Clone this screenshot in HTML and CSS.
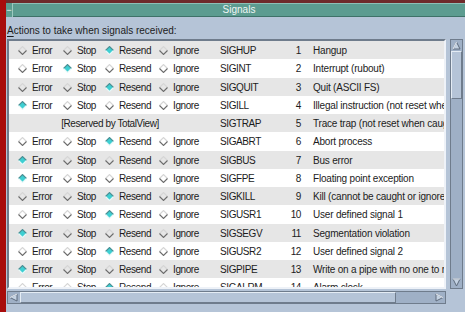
FILE: index.html
```html
<!DOCTYPE html>
<html lang="en">
<head>
    <meta charset="UTF-8">
    <title>Signals</title>
    <link rel="stylesheet" href="styles.css">
</head>
<body>
    <div class="stripe"></div>
    <div class="window">
        <div class="titlebar">
            <div class="menu-btn">&minus;</div>
            <div class="title">Signals</div>
        </div>

        <div class="content">
            <div class="label"><u>A</u>ctions to take when signals received:</div>

            <div class="list-area">
                <div class="list-row">
                    <div class="list-frame">
                        <div class="list" id="list"></div>
                    </div>
                    <div class="vscroll">
                        <div class="arrow arrow-up">
                            <svg width="9" height="9" viewBox="0 0 9 9"><polygon points="4.5,1 8,8 1,8" class="arr"/><path d="M1 8 L4.5 1" class="arr-hi"/></svg>
                        </div>
                        <div class="vthumb"></div>
                        <div class="vtrough"></div>
                        <div class="arrow arrow-down">
                            <svg width="9" height="9" viewBox="0 0 9 9"><polygon points="1,1 8,1 4.5,8" class="arr"/><path d="M1 1 L8 1" class="arr-hi"/></svg>
                        </div>
                    </div>
                </div>

                <div class="hscroll">
                    <div class="arrow arrow-left">
                        <svg width="9" height="9" viewBox="0 0 9 9"><polygon points="1,4.5 8,1 8,8" class="arr"/><path d="M1 4.5 L8 1" class="arr-hi"/></svg>
                    </div>
                    <div class="hthumb"></div>
                    <div class="htrough"></div>
                    <div class="arrow arrow-right">
                        <svg width="9" height="9" viewBox="0 0 9 9"><polygon points="1,1 8,4.5 1,8" class="arr"/><path d="M1 1 L8 4.5" class="arr-hi"/></svg>
                    </div>
                </div>
            </div>
        </div>
    </div>

    <script>
        // action index: 0 Error, 1 Stop, 2 Resend, 3 Ignore, -1 reserved
        var signals = [
            ['SIGHUP', 1, 'Hangup', 2],
            ['SIGINT', 2, 'Interrupt (rubout)', 1],
            ['SIGQUIT', 3, 'Quit (ASCII FS)', 2],
            ['SIGILL', 4, 'Illegal instruction (not reset when caught)', 0],
            ['SIGTRAP', 5, 'Trace trap (not reset when caught)', -1],
            ['SIGABRT', 6, 'Abort process', 2],
            ['SIGBUS', 7, 'Bus error', 0],
            ['SIGFPE', 8, 'Floating point exception', 0],
            ['SIGKILL', 9, 'Kill (cannot be caught or ignored)', 2],
            ['SIGUSR1', 10, 'User defined signal 1', 2],
            ['SIGSEGV', 11, 'Segmentation violation', 0],
            ['SIGUSR2', 12, 'User defined signal 2', 2],
            ['SIGPIPE', 13, 'Write on a pipe with no one to read it', 0],
            ['SIGALRM', 14, 'Alarm clock', 2]
        ];
        var actions = ['Error', 'Stop', 'Resend', 'Ignore'];

        function diamond(on) {
            return '<svg class="dia ' + (on ? 'on' : 'off') + '" width="9" height="9" viewBox="0 0 9 9">' +
                '<polygon points="4.5,0.5 8.5,4.5 4.5,8.5 0.5,4.5" class="dia-fill"/>' +
                '<path d="M0.5 4.5 L4.5 0.5 L8.5 4.5" class="dia-top"/>' +
                '<path d="M0.5 4.5 L4.5 8.5 L8.5 4.5" class="dia-bot"/></svg>';
        }

        var html = '';
        signals.forEach(function (s) {
            html += '<div class="sig">';
            if (s[3] < 0) {
                html += '<div class="reserved">[Reserved by TotalView]</div>';
            } else {
                actions.forEach(function (a, i) {
                    html += '<div class="toggle">' + diamond(i === s[3]) + '<span>' + a + '</span></div>';
                });
            }
            html += '<div class="name">' + s[0] + '</div>';
            html += '<div class="num">' + s[1] + '</div>';
            html += '<div class="desc">' + s[2] + '</div>';
            html += '</div>';
        });
        document.getElementById('list').innerHTML = html;
    </script>
</body>
</html>
```

FILE: styles.css
```css
html, body {
    height: 100%;
}

body {
    margin: 0;
    display: flex;
    font-family: 'Liberation Sans', Arial, sans-serif;
    font-size: 10px;
    color: #1c1c1c;
    background: #b5c4d7;
    overflow: hidden;
}

.stripe {
    width: 6px;
    background: #a80c0c;
}

.window {
    flex: 1;
    display: flex;
    flex-direction: column;
}

.titlebar {
    height: 14px;
    border-top: 3px solid #6e2a2a;
    display: flex;
    background: #5c9c90;
    color: #eef6f4;
}

.menu-btn {
    width: 6px;
    border-right: 1px solid #9ccac0;
    font-size: 9px;
    line-height: 14px;
    text-align: center;
    overflow: hidden;
}

.title {
    flex: 1;
    text-align: center;
    line-height: 14px;
    box-shadow: inset 0 1px 0 #8cc0b6, inset 0 -1px 0 #3e7268;
}

.content {
    flex: 1;
    display: flex;
    flex-direction: column;
    padding: 0 2px 0 1px;
}

.label {
    padding-top: 8px;
    line-height: 12px;
    height: 14px;
}

.label u {
    text-underline-offset: 2px;
}

.list-area {
    display: flex;
    flex-direction: column;
    gap: 2px;
}

.list-row {
    display: flex;
    gap: 4px;
    height: 250px;
}

.list-frame {
    flex: 1;
    border: 2px solid;
    border-color: #6f7c8c #eef2f8 #eef2f8 #6f7c8c;
    background: #ffffff;
    overflow: hidden;
}

.sig {
    display: grid;
    grid-template-columns: 45px 42px 54px 61px 67px 14px 1fr;
    align-items: center;
    height: 18.25px;
    padding-left: 9px;
    padding-top: 1px;
    box-sizing: border-box;
    letter-spacing: -0.4px;
    white-space: nowrap;
}

.sig:nth-child(odd) {
    background: #e6e6e6;
}

.toggle {
    display: flex;
    align-items: center;
}

.dia {
    margin-right: 5px;
    flex: none;
}

.dia-fill {
    fill: none;
}

.dia-top, .dia-bot {
    fill: none;
    stroke-width: 1.1;
}

.dia.off .dia-top {
    stroke: #d6d6d6;
}

.dia.off .dia-bot {
    stroke: #6c6c6c;
}

.dia.on .dia-fill {
    fill: #3ecfd2;
}

.dia.on .dia-top {
    stroke: #4b8f94;
}

.dia.on .dia-bot {
    stroke: #e8f8f8;
}

.reserved {
    grid-column: 1 / 5;
    text-align: center;
    padding-right: 18px;
}

.num {
    text-align: right;
}

.desc {
    padding-left: 12px;
    letter-spacing: -0.2px;
    overflow: hidden;
}

/* scrollbars */
.vscroll {
    width: 11px;
    display: flex;
    flex-direction: column;
    background: #9fb0c6;
    border: 1px solid #6f7c8c;
}

.vthumb {
    height: 46px;
    background: #b5c4d7;
    border: 1px solid;
    border-color: #e4ecf4 #6f7c8c #6f7c8c #e4ecf4;
}

.vtrough {
    flex: 1;
}

.hscroll {
    height: 11px;
    margin-right: 17px;
    display: flex;
    background: #9fb0c6;
    border: 1px solid #6f7c8c;
}

.hthumb {
    width: 374px;
    margin-left: 1px;
    background: #b5c4d7;
    border: 1px solid;
    border-color: #e4ecf4 #6f7c8c #6f7c8c #e4ecf4;
}

.htrough {
    flex: 1;
}

.arrow {
    width: 11px;
    height: 11px;
    display: flex;
    align-items: center;
    justify-content: center;
    flex: none;
}

.arr {
    fill: #c4d2e2;
    stroke: #5e6b7c;
    stroke-width: 1;
}

.arr-hi {
    fill: none;
    stroke: #f0f4fa;
    stroke-width: 1;
}
```
